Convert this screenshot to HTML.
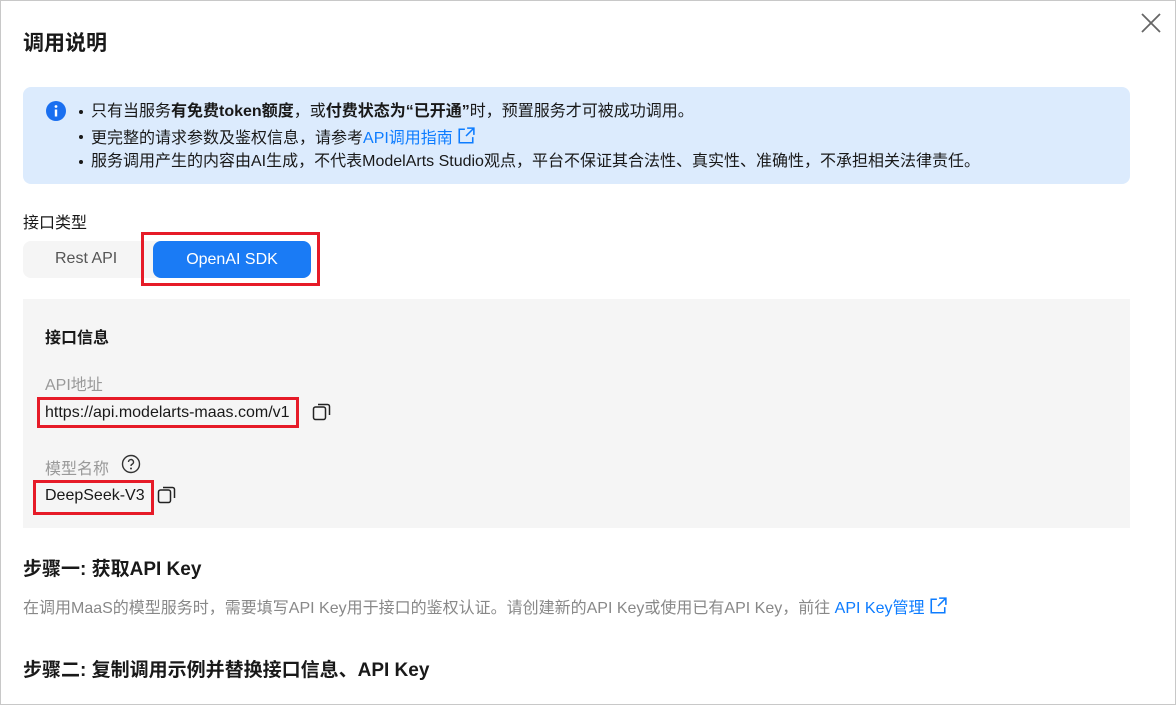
<!DOCTYPE html>
<html><head><meta charset="utf-8"><style>
*{margin:0;padding:0;box-sizing:border-box}
body{width:1176px;height:705px;overflow:hidden;background:#fff;font-family:"Liberation Sans","Noto Sans CJK SC",sans-serif;color:#191919;position:relative;font-size:16px}
.frame{position:absolute;left:0;top:0;width:1176px;height:705px;border:1px solid #c8c8c8}
.abs{position:absolute;white-space:nowrap}
.title{left:23px;top:27px;font-size:21px;font-weight:bold}
.close{left:1140px;top:12px}
.info{position:absolute;left:23px;top:87px;width:1107px;height:97px;background:#dcebfd;border-radius:8px}
.info .l{position:absolute;left:68px;font-size:16px;white-space:nowrap;line-height:20px}
.dot{position:absolute;left:-12px;top:8px;width:4px;height:4px;border-radius:50%;background:#191919}
a{color:#0d7cff;text-decoration:none}
.gray{background:#f5f5f5}
.redbox{position:absolute;border:3px solid #e61b28}
</style></head><body>
<div class="frame"></div>
<div class="abs title">调用说明</div>
<svg class="abs close" width="22" height="22" viewBox="0 0 22 22"><path d="M2 2L20 20M20 2L2 20" stroke="#666" stroke-width="1.8"/></svg>
<div class="info">
<svg style="position:absolute;left:23px;top:14px" width="20" height="20" viewBox="0 0 20 20"><circle cx="10" cy="10" r="10" fill="#1a6ff0"/><rect x="8.8" y="8.5" width="2.4" height="7" fill="#fff"/><circle cx="10" cy="5.5" r="1.4" fill="#fff"/></svg>
<div class="l" style="top:15px"><span class="dot"></span>只有当服务<b>有免费token额度</b>，或<b>付费状态为“已开通”</b>时，预置服务才可被成功调用。</div>
<div class="l" style="top:40px"><span class="dot"></span>更完整的请求参数及鉴权信息，请参考<a>API调用指南</a> <svg width="18" height="18" viewBox="0 0 16 16" style="vertical-align:-2px"><path d="M7 2H2v12h12V9M9 1h6v6M15 1L8 8" fill="none" stroke="#0d7cff" stroke-width="1.4"/></svg></div>
<div class="l" style="top:65px"><span class="dot"></span>服务调用产生的内容由AI生成，不代表ModelArts Studio观点，平台不保证其合法性、真实性、准确性，不承担相关法律责任。</div>
</div>
<div class="abs" style="left:23px;top:209px">接口类型</div>
<div class="abs gray" style="left:23px;top:241px;width:240px;height:37px;border-radius:8px"></div>
<div class="abs" style="left:55px;top:250px;color:#555;font-size:16px">Rest API</div>
<div class="abs" style="left:153px;top:241px;width:158px;height:37px;border-radius:8px;background:#1a7bf5;color:#fff;font-size:16px;text-align:center;line-height:37px">OpenAI SDK</div>
<div class="redbox" style="left:141px;top:232px;width:179px;height:54px"></div>
<div class="abs gray" style="left:23px;top:299px;width:1107px;height:229px"></div>
<div class="abs" style="left:45px;top:324px;font-weight:bold;font-size:16px">接口信息</div>
<div class="abs" style="left:45px;top:371px;color:#999;font-size:16px">API地址</div>
<div class="abs" style="left:45px;top:404px;font-size:16px">https://api.modelarts-maas.com/v1</div>
<div class="redbox" style="left:37px;top:397px;width:262px;height:31px"></div>
<svg class="abs" style="left:312px;top:402px" width="20" height="20" viewBox="0 0 20 20"><rect x="1.5" y="5" width="12" height="12.5" rx="2" fill="none" stroke="#222" stroke-width="1.5"/><path d="M6 2.5h9.5a2 2 0 0 1 2 2V13" fill="none" stroke="#222" stroke-width="1.5"/></svg>
<div class="abs" style="left:45px;top:455px;color:#999;font-size:16px">模型名称</div>
<svg class="abs" style="left:121px;top:454px" width="20" height="20" viewBox="0 0 20 20"><circle cx="10" cy="10" r="8.5" fill="none" stroke="#333" stroke-width="1.4"/><path d="M7.5 8a2.5 2.5 0 1 1 3.5 2.3c-.8.4-1 .9-1 1.7" fill="none" stroke="#333" stroke-width="1.4"/><circle cx="10" cy="14.5" r="1" fill="#333"/></svg>
<div class="abs" style="left:45px;top:487px;font-size:16px">DeepSeek-V3</div>
<div class="redbox" style="left:33px;top:480px;width:121px;height:35px"></div>
<svg class="abs" style="left:157px;top:485px" width="20" height="20" viewBox="0 0 20 20"><rect x="1.5" y="5" width="12" height="12.5" rx="2" fill="none" stroke="#222" stroke-width="1.5"/><path d="M6 2.5h9.5a2 2 0 0 1 2 2V13" fill="none" stroke="#222" stroke-width="1.5"/></svg>
<div class="abs" style="left:23px;top:554px;font-weight:bold;font-size:19px">步骤一: 获取API Key</div>
<div class="abs" style="left:23px;top:594px;color:#888">在调用MaaS的模型服务时，需要填写API Key用于接口的鉴权认证。请创建新的API Key或使用已有API Key，前往 <a>API Key管理</a> <svg width="18" height="18" viewBox="0 0 16 16" style="vertical-align:-2px"><path d="M7 2H2v12h12V9M9 1h6v6M15 1L8 8" fill="none" stroke="#0d7cff" stroke-width="1.4"/></svg></div>
<div class="abs" style="left:23px;top:655px;font-weight:bold;font-size:19px">步骤二: 复制调用示例并替换接口信息、API Key</div>
</body></html>
